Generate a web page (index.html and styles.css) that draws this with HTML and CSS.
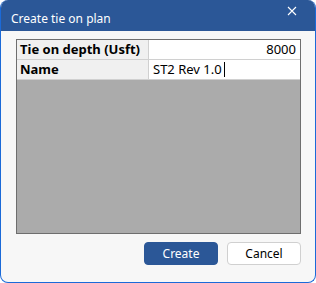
FILE: index.html
```html
<!DOCTYPE html>
<html>
<head>
<meta charset="utf-8">
<link rel="stylesheet" href="styles.css">
</head>
<body>
<div class="window">
  <div class="titlebar">
    <span class="title">Create tie on plan</span>
    <svg class="close" width="10" height="10" viewBox="0 0 10 10"><path d="M1 1 L9 9 M9 1 L1 9" stroke="#fff" stroke-width="1.1" fill="none"/></svg>
  </div>
  <div class="content">
    <div class="grid">
      <div class="row">
        <div class="label">Tie on depth (Usft)</div>
        <div class="value num">8000</div>
      </div>
      <div class="row">
        <div class="label">Name</div>
        <div class="value">ST2 Rev 1.0<span class="caret"></span></div>
      </div>
      <div class="empty"></div>
    </div>
    <div class="buttons">
      <button class="btn primary">Create</button>
      <button class="btn">Cancel</button>
    </div>
  </div>
</div>
</body>
</html>
```
FILE: styles.css
```css
html, body { margin: 0; padding: 0; background: #fff; }
.window {
  width: 316px; height: 283px; box-sizing: border-box;
  border: 1px solid #1b6ad8; border-top: none;
  border-radius: 8px; overflow: hidden;
  background: #f7f7f7;
  display: flex; flex-direction: column;
  font-family: "Noto Sans", "DejaVu Sans", sans-serif;
}
.titlebar {
  height: 31px; flex: none; background: #2b5797;
  display: flex; align-items: center; justify-content: space-between;
  padding: 0 19px 0 11px; margin: 0 -1px;
  color: #fff;
}
.title { font-size: 12px; margin-top: 5px; }
.close { margin-top: -9px; }
.content { flex: 1; padding: 8px 14px 0 15px; display: flex; flex-direction: column; }
.grid {
  height: 195px; box-sizing: border-box;
  border: 1px solid #6e6e6e;
  display: flex; flex-direction: column;
}
.row { display: flex; height: 19px; border-bottom: 1px solid #d0d0d0; }
.label {
  width: 132px; flex: none; background: #f0f0f0; border-right: 1px solid #d0d0d0;
  font-weight: bold; font-size: 13px; color: #000; padding-left: 3px;
  line-height: 19px; white-space: nowrap; box-sizing: border-box;
}
.value { flex: 1; background: #fff; font-size: 13px; line-height: 19px; padding: 0 4px; color: #000; }
.value.num { text-align: right; }
.caret { display: inline-block; width: 1px; height: 15px; background: #000; vertical-align: -3px; margin-left: 2px; }
.empty { flex: 1; background: #ababab; }
.buttons { display: flex; justify-content: flex-end; gap: 9px; margin-top: 8px; }
.btn {
  width: 74px; height: 23px; box-sizing: border-box; border-radius: 4px;
  font-family: "Noto Sans", "DejaVu Sans", sans-serif; font-size: 12px;
  background: #fff; border: 1px solid #d0d0d0; color: #000; padding: 0;
}
.btn.primary { background: #2b5797; border-color: #2b5797; color: #fff; }
```
